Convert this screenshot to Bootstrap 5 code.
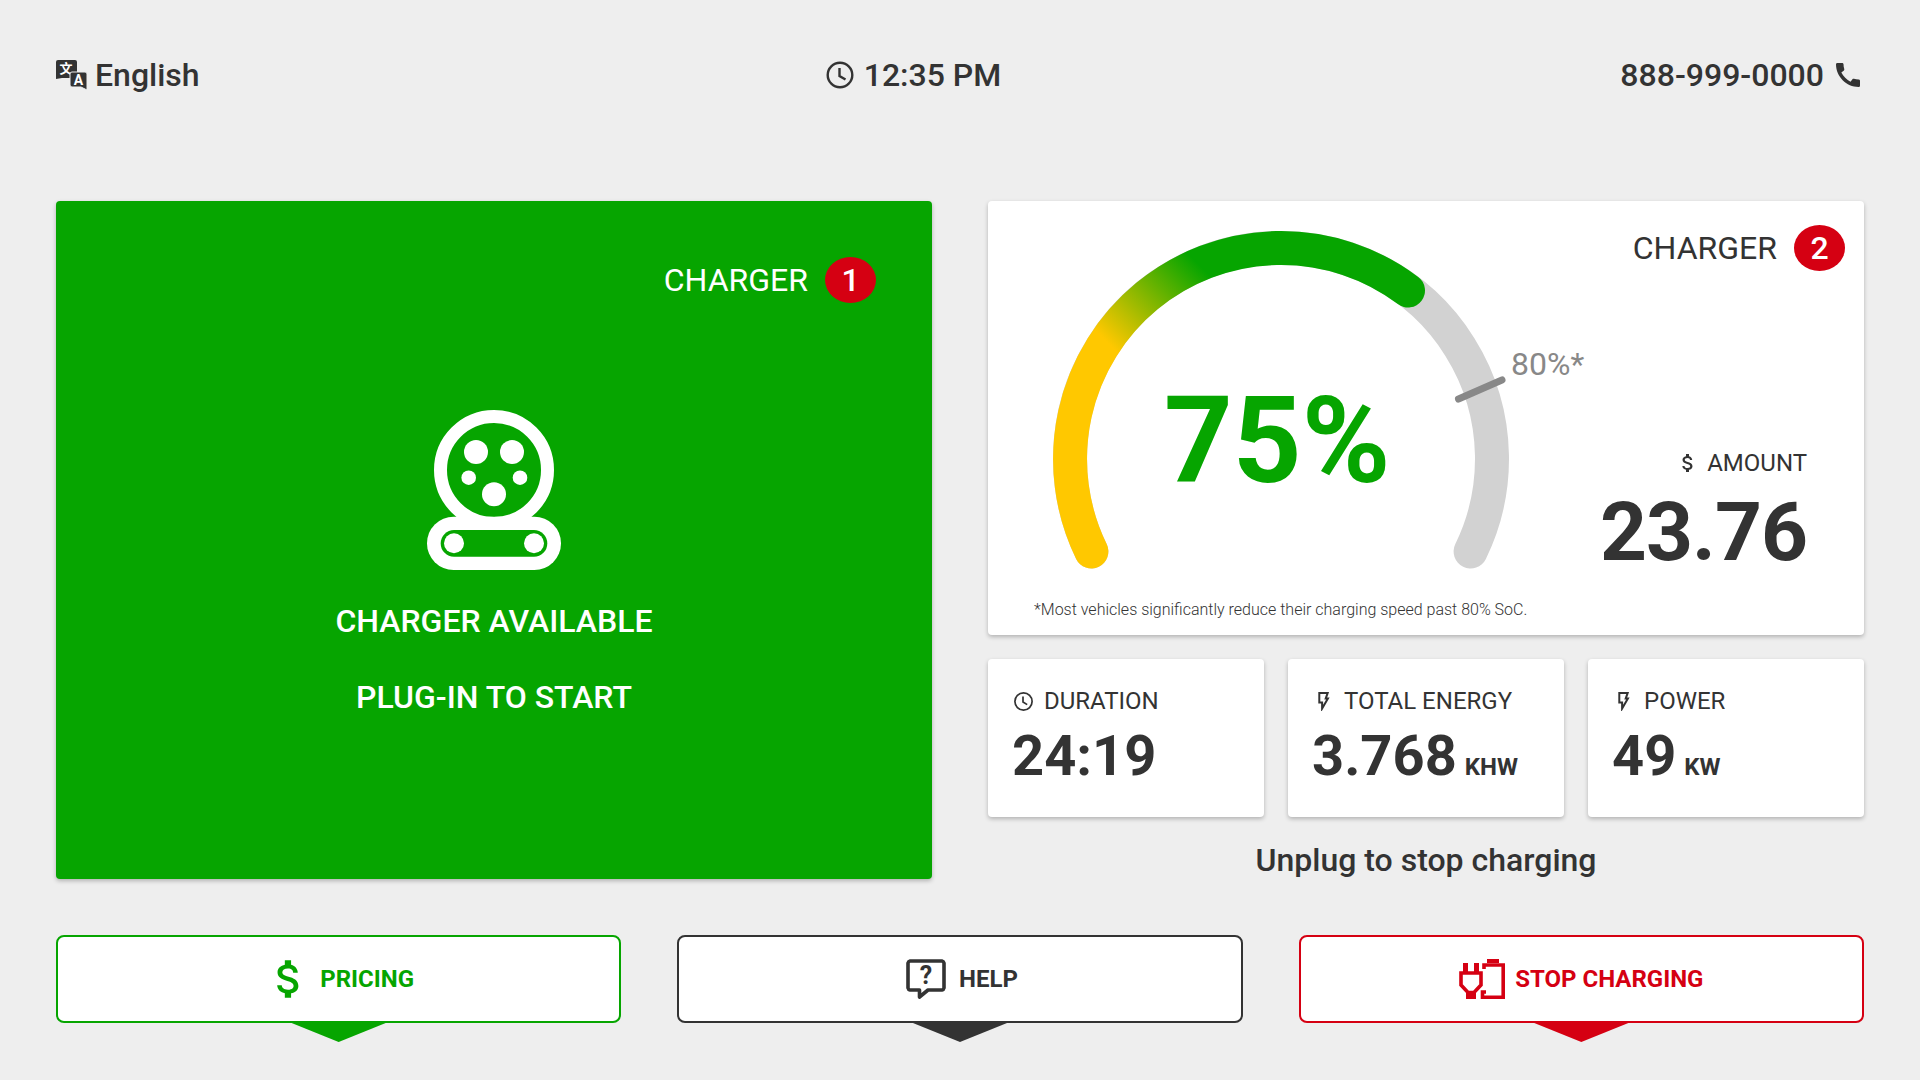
<!DOCTYPE html>
<html lang="en">
<head>
    <meta charset="UTF-8">
    <meta name="viewport" content="width=device-width, initial-scale=1.0">
    <title>EV Charger Station</title>
    <link href="https://cdn.jsdelivr.net/npm/bootstrap@5.3.0/dist/css/bootstrap.min.css" rel="stylesheet">
    <style>
        body {
            background-color: #eee;
            color: #333;
            font-family: Roboto, "Liberation Sans", sans-serif;
            min-height: 1080px;
        }
        .page-wrap {
            padding: 50px 56px 0;
        }
        .top-bar {
            height: 50px;
            margin-bottom: 101px;
            font-size: 32px;
            font-weight: 500;
            line-height: 50px;
        }
        .top-time {
            gap: 10px;
            margin-left: 7px;
        }
        .top-phone {
            gap: 8px;
        }
        .lang-icon {
            overflow: visible;
        }
        .main-row {
            --bs-gutter-x: 56px;
            --bs-gutter-y: 0;
            height: 678px;
        }
        .panel-box {
            border-radius: 4px;
            box-shadow: 0 2px 4px rgba(0, 0, 0, .25);
            background: #fff;
        }
        .panel-green {
            background: #06a500;
            color: #fff;
            height: 100%;
            padding: 56px;
        }
        .charger-tag {
            font-size: 32px;
            line-height: 46px;
            gap: 17px;
        }
        .num-dot {
            width: 51px;
            height: 46px;
            border-radius: 50%;
            background: #d50012;
            color: #fff;
            font-weight: 500;
        }
        .plug-art {
            margin-top: 107px;
        }
        .avail-text {
            font-size: 32px;
            font-weight: 500;
            line-height: 50px;
            margin-top: 26px;
        }
        .gauge-panel {
            height: 434px;
        }
        .gauge-side {
            width: 256px;
            padding: 24px 19px 0 0;
        }
        .foot-note {
            font-size: 16px;
            font-weight: 300;
            line-height: 20px;
            padding-left: 46px;
            margin-top: 4px;
        }
        .amount-label {
            font-size: 24px;
            line-height: 30px;
            margin-top: 177px;
            padding-right: 38px;
            gap: 10px;
        }
        .amount-value {
            font-size: 82px;
            font-weight: 700;
            letter-spacing: -1px;
            line-height: 90px;
            margin-left: -30px;
            padding-right: 38px;
            margin-top: 9px;
        }
        .stat-grid {
            display: grid;
            grid-template-columns: repeat(3, 1fr);
            gap: 24px;
            margin-top: 24px;
        }
        .stat-box {
            height: 158px;
            padding: 27px 24px 0;
        }
        .stat-label {
            font-size: 24px;
            line-height: 30px;
            gap: 11px;
            padding-left: 2px;
        }
        .stat-icon {
            width: 19px;
        }
        .stat-value {
            font-size: 56px;
            font-weight: 700;
            line-height: 68px;
            margin-top: 6px;
        }
        .stat-unit {
            font-size: 24px;
            margin-left: 8px;
        }
        .unplug-text {
            font-size: 32px;
            font-weight: 500;
            line-height: 38px;
            margin-top: 24px;
        }
        .action-grid {
            display: grid;
            grid-template-columns: repeat(3, 1fr);
            gap: 56px;
            margin-top: 56px;
        }
        .action-btn {
            position: relative;
            height: 88px;
            border: 2px solid currentColor;
            border-radius: 8px;
            background: #fff;
            font-size: 24px;
            font-weight: 700;
        }
        .action-btn:hover, .action-btn:active {
            background: #fff;
            border-color: currentColor;
        }
        .action-btn::after {
            content: "";
            position: absolute;
            left: 50%;
            top: 100%;
            width: 104px;
            height: 21px;
            margin-left: -52px;
            background: currentColor;
            clip-path: polygon(0 0, 100% 0, 50% 100%);
        }
        .btn-pricing {
            gap: 11px;
            padding-left: 18px;
        }
        .btn-gap-wide {
            gap: 13px;
            padding-left: 16px;
        }
        .btn-gap-tight {
            gap: 10px;
        }
        .tone-green, .tone-green:hover, .tone-green:active { color: #06a500 !important; }
        .tone-dark, .tone-dark:hover, .tone-dark:active { color: #333 !important; }
        .tone-red, .tone-red:hover, .tone-red:active { color: #d50012 !important; }
    </style>
</head>
<body>
    <div class="page-wrap">
        <!-- Header -->
        <div class="top-bar d-flex justify-content-between align-items-center">
            <div class="d-flex align-items-center gap-2">
                <svg class="lang-icon" width="31" height="30" viewBox="0 0 31 30" aria-hidden="true">
                    <path d="M2 0H19a2 2 0 0 1 2 2V16a2 2 0 0 1-2 2H6L0 19V2a2 2 0 0 1 2-2z" fill="#333"/>
                    <text x="10" y="13" font-size="13" font-weight="700" fill="#fff" text-anchor="middle" font-family="Noto Sans CJK SC">文</text>
                    <path d="M16 12H29a2 2 0 0 1 2 2V30L25 27H16a2 2 0 0 1-2-2V14a2 2 0 0 1 2-2z" fill="#333" stroke="#eee" stroke-width="1"/>
                    <text x="22.5" y="25" font-size="14" font-weight="700" fill="#fff" text-anchor="middle">A</text>
                </svg>
                <span>English</span>
            </div>
            <div class="top-time d-flex align-items-center">
                <svg width="28" height="28" viewBox="0 0 28 28" fill="none" stroke="#333" stroke-width="2.4" aria-hidden="true">
                    <circle cx="14" cy="14" r="12.3"/>
                    <path d="M13.5 7V15L19.5 18.5"/>
                </svg>
                <span>12:35 PM</span>
            </div>
            <div class="top-phone d-flex align-items-center">
                <span>888-999-0000</span>
                <svg width="32" height="32" viewBox="0 0 24 24" fill="#333" aria-hidden="true">
                    <path d="M20.01 15.38c-1.23 0-2.42-.2-3.53-.56-.35-.12-.74-.03-1.01.24l-1.57 1.97c-2.83-1.35-5.48-3.9-6.89-6.83l1.95-1.66c.27-.28.35-.67.24-1.02-.37-1.11-.56-2.3-.56-3.53 0-.54-.45-.99-.99-.99H4.19C3.65 3 3 3.24 3 3.99 3 13.28 10.73 21 20.01 21c.71 0 .99-.63.99-1.18v-3.45c0-.54-.45-.99-.99-.99z"/>
                </svg>
            </div>
        </div>

        <div class="row main-row">
            <!-- Charger 1 -->
            <div class="col-6">
                <div class="panel-box panel-green d-flex flex-column align-items-center">
                    <div class="charger-tag d-flex align-items-center align-self-end">
                        <span>CHARGER</span>
                        <span class="num-dot d-flex align-items-center justify-content-center">1</span>
                    </div>
                    <svg class="plug-art" width="134" height="160" viewBox="0 0 134 160" aria-hidden="true">
                        <circle cx="67" cy="60" r="53.5" fill="none" stroke="#fff" stroke-width="13"/>
                        <circle cx="49" cy="42" r="12" fill="#fff"/>
                        <circle cx="85" cy="42" r="12" fill="#fff"/>
                        <circle cx="41.7" cy="67.7" r="7.3" fill="#fff"/>
                        <circle cx="93" cy="67.7" r="7.3" fill="#fff"/>
                        <circle cx="67" cy="84.3" r="12" fill="#fff"/>
                        <rect x="0" y="106.7" width="134" height="53.3" rx="26.6" fill="#fff"/>
                        <rect x="13.7" y="120" width="106.6" height="26.7" rx="13.3" fill="#06a500"/>
                        <circle cx="27" cy="133.3" r="10" fill="#fff"/>
                        <circle cx="107" cy="133.3" r="10" fill="#fff"/>
                    </svg>
                    <div class="avail-text">CHARGER AVAILABLE</div>
                    <div class="avail-text">PLUG-IN TO START</div>
                </div>
            </div>

            <!-- Charger 2 -->
            <div class="col-6">
                <div class="panel-box gauge-panel d-flex">
                    <div class="flex-grow-1">
                        <svg width="620" height="395" viewBox="-1 -1 620 395" class="d-block">
                            <defs>
                                <linearGradient id="socGrad" gradientUnits="userSpaceOnUse" x1="130" y1="152" x2="215" y2="68">
                                    <stop offset="0" stop-color="#ffc800"/>
                                    <stop offset="1" stop-color="#06a500"/>
                                </linearGradient>
                            </defs>
                            <path d="M102.4 349.5A211 211 0 1 1 481.6 349.5" fill="none" stroke="#d2d2d2" stroke-width="34" stroke-linecap="round"/>
                            <path d="M102.4 349.5A211 211 0 0 1 419 88.5" fill="none" stroke="url(#socGrad)" stroke-width="34" stroke-linecap="round"/>
                            <line x1="469.5" y1="197" x2="513" y2="178" stroke="#888" stroke-width="7" stroke-linecap="round"/>
                            <text x="522" y="173" font-size="32" fill="#888">80%*</text>
                            <text x="175" y="280" font-size="120" font-weight="700" fill="#06a500">75%</text>
                        </svg>
                        <div class="foot-note">*Most vehicles significantly reduce their charging speed past 80% SoC.</div>
                    </div>
                    <div class="gauge-side d-flex flex-column">
                        <div class="charger-tag d-flex align-items-center align-self-end">
                            <span>CHARGER</span>
                            <span class="num-dot d-flex align-items-center justify-content-center">2</span>
                        </div>
                        <div class="amount-label d-flex align-items-center justify-content-end">
                            <svg width="18" height="24" viewBox="3 2 18 20" fill="#333" aria-hidden="true">
                                <path d="M11.8 10.9c-2.27-.59-3-1.2-3-2.15 0-1.09 1.01-1.85 2.7-1.85 1.78 0 2.44.85 2.5 2.1h2.21c-.07-1.72-1.12-3.3-3.21-3.81V3h-3v2.16c-1.94.42-3.5 1.68-3.5 3.61 0 2.31 1.91 3.46 4.7 4.13 2.5.6 3 1.48 3 2.41 0 .69-.49 1.79-2.7 1.79-2.06 0-2.87-.92-2.98-2.1h-2.2c.12 2.19 1.76 3.42 3.68 3.83V21h3v-2.15c1.95-.37 3.5-1.5 3.5-3.55 0-2.84-2.43-3.81-4.7-4.4z"/>
                            </svg>
                            <span>AMOUNT</span>
                        </div>
                        <div class="amount-value text-end">23.76</div>
                    </div>
                </div>

                <div class="stat-grid">
                    <div class="panel-box stat-box">
                        <div class="stat-label d-flex align-items-center">
                            <svg class="stat-icon" width="19" height="19" viewBox="0 0 19 19" fill="none" stroke="#333" stroke-width="1.7" aria-hidden="true">
                                <circle cx="9.5" cy="9.5" r="8.6"/>
                                <path d="M9 4.5V10L13.2 12.6"/>
                            </svg>
                            <span>DURATION</span>
                        </div>
                        <div class="stat-value">24:19</div>
                    </div>
                    <div class="panel-box stat-box">
                        <div class="stat-label d-flex align-items-center">
                            <svg class="stat-icon" width="19" height="19" viewBox="-4.5 0 19 19" fill="none" stroke="#333" stroke-width="2" stroke-linejoin="miter" aria-hidden="true">
                                <path d="M.8 .9H9.2L7.2 6.6H9.4L3.6 16.6V10.6H.8Z"/>
                            </svg>
                            <span>TOTAL ENERGY</span>
                        </div>
                        <div class="stat-value">3.768<span class="stat-unit">KHW</span></div>
                    </div>
                    <div class="panel-box stat-box">
                        <div class="stat-label d-flex align-items-center">
                            <svg class="stat-icon" width="19" height="19" viewBox="-4.5 0 19 19" fill="none" stroke="#333" stroke-width="2" stroke-linejoin="miter" aria-hidden="true">
                                <path d="M.8 .9H9.2L7.2 6.6H9.4L3.6 16.6V10.6H.8Z"/>
                            </svg>
                            <span>POWER</span>
                        </div>
                        <div class="stat-value">49<span class="stat-unit">KW</span></div>
                    </div>
                </div>

                <div class="unplug-text text-center">Unplug to stop charging</div>
            </div>
        </div>

        <!-- Bottom actions -->
        <div class="action-grid">
            <button type="button" class="btn action-btn btn-pricing tone-green d-flex align-items-center justify-content-center">
                <svg width="40" height="40" viewBox="2.4 2.4 19.2 19.2" fill="#06a500" aria-hidden="true">
                    <path d="M11.8 10.9c-2.27-.59-3-1.2-3-2.15 0-1.09 1.01-1.85 2.7-1.85 1.78 0 2.44.85 2.5 2.1h2.21c-.07-1.72-1.12-3.3-3.21-3.81V3h-3v2.16c-1.94.42-3.5 1.68-3.5 3.61 0 2.31 1.91 3.46 4.7 4.13 2.5.6 3 1.48 3 2.41 0 .69-.49 1.79-2.7 1.79-2.06 0-2.87-.92-2.98-2.1h-2.2c.12 2.19 1.76 3.42 3.68 3.83V21h3v-2.15c1.95-.37 3.5-1.5 3.5-3.55 0-2.84-2.43-3.81-4.7-4.4z"/>
                </svg>
                <span>PRICING</span>
            </button>
            <button type="button" class="btn action-btn btn-gap-wide tone-dark d-flex align-items-center justify-content-center">
                <svg width="40" height="40" viewBox="0 0 40 40" aria-hidden="true">
                    <path d="M4 2H36a2.5 2.5 0 0 1 2 2V29a2.5 2.5 0 0 1-2 2H22L13.5 38V31H4a2.5 2.5 0 0 1-2-2V4a2.5 2.5 0 0 1 2-2z" fill="none" stroke="#333" stroke-width="3.6" stroke-linejoin="round"/>
                    <text x="20" y="25" font-size="25" font-weight="700" fill="#333" text-anchor="middle">?</text>
                </svg>
                <span>HELP</span>
            </button>
            <button type="button" class="btn action-btn btn-gap-tight tone-red d-flex align-items-center justify-content-center">
                <svg width="46" height="40" viewBox="0 0 46 40" aria-hidden="true">
                    <g fill="#d50012">
                        <rect x="4" y="4" width="5" height="10"/>
                        <rect x="15" y="4" width="5" height="10"/>
                        <rect x="7" y="32" width="10" height="8"/>
                        <rect x="28" y="0" width="12" height="4"/>
                    </g>
                    <path d="M2 14H22V26L15 33.5H9L2 26Z" fill="none" stroke="#d50012" stroke-width="3.6"/>
                    <path d="M25 10V6H44.2V38.2H23.5V33H27" fill="none" stroke="#d50012" stroke-width="3.6"/>
                </svg>
                <span>STOP CHARGING</span>
            </button>
        </div>
    </div>

    <script src="https://cdn.jsdelivr.net/npm/bootstrap@5.3.0/dist/js/bootstrap.bundle.min.js"></script>
</body>
</html>
